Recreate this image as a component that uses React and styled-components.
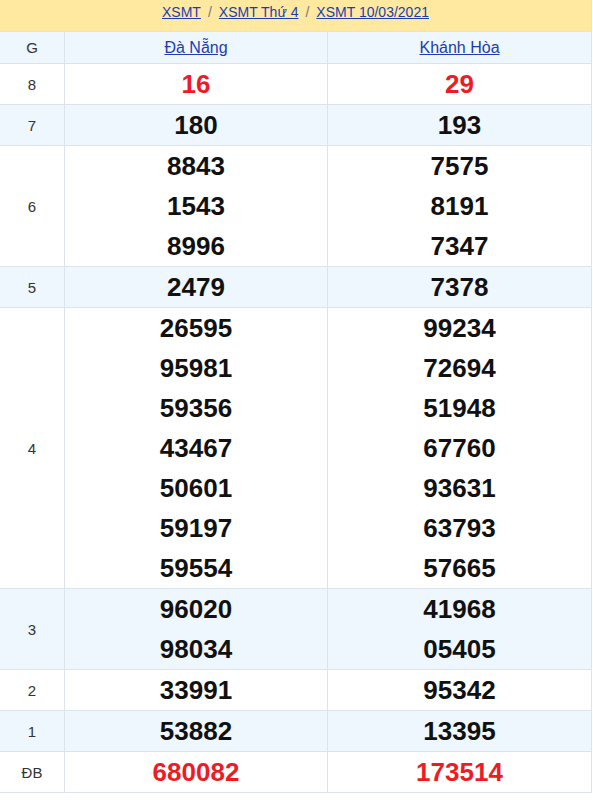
import React from 'react'
import styled, { createGlobalStyle } from 'styled-components'

const Global = createGlobalStyle`
  body {
    margin: 0;
    background: #fff;
    font-family: "Liberation Sans", Arial, sans-serif;
  }
`

const Board = styled.div`
  width: 592px;
  box-sizing: border-box;
  border-right: 1px solid #dde3ea;
`

const Crumbs = styled.div`
  height: 31px;
  line-height: 25px;
  background: #ffe8a0;
  border-bottom: 1px solid #dde3ea;
  text-align: center;
  font-size: 14px;
  color: #666;
`

const Crumb = styled.a`
  color: #1c3dae;
  text-decoration: underline;
`

const Sep = styled.span`
  color: #777;
  margin: 0 7px;
`

const Row = styled.div`
  display: grid;
  grid-template-columns: 65px 263px 263px;
  background: ${p => (p.$shade ? '#eef6fe' : '#fff')};
  border-bottom: 1px solid #dde3ea;
`

const Label = styled.div`
  display: flex;
  align-items: center;
  justify-content: center;
  border-right: 1px solid #dde3ea;
  font-size: 15px;
  color: #333;
`

const Cell = styled.div`
  display: flex;
  flex-direction: column;
  align-items: center;
  border-right: 1px solid #dde3ea;
  &:last-child {
    border-right: none;
  }
`

const Province = styled.a`
  line-height: 31px;
  font-size: 16px;
  color: #1c3dae;
  text-decoration: underline;
`

const Num = styled.div`
  height: 40px;
  line-height: 40px;
  font-size: 26px;
  font-weight: bold;
  color: ${p => (p.$red ? '#ed1c24' : '#111')};
`

const prizes = [
  { g: '8', red: true, a: ['16'], b: ['29'] },
  { g: '7', a: ['180'], b: ['193'] },
  { g: '6', a: ['8843', '1543', '8996'], b: ['7575', '8191', '7347'] },
  { g: '5', a: ['2479'], b: ['7378'] },
  {
    g: '4',
    a: ['26595', '95981', '59356', '43467', '50601', '59197', '59554'],
    b: ['99234', '72694', '51948', '67760', '93631', '63793', '57665']
  },
  { g: '3', a: ['96020', '98034'], b: ['41968', '05405'] },
  { g: '2', a: ['33991'], b: ['95342'] },
  { g: '1', a: ['53882'], b: ['13395'] },
  { g: 'ĐB', red: true, a: ['680082'], b: ['173514'] }
]

const App = () => (
  <Board>
    <Global />
    <Crumbs>
      <Crumb href='#'>XSMT</Crumb>
      <Sep>/</Sep>
      <Crumb href='#'>XSMT Thứ 4</Crumb>
      <Sep>/</Sep>
      <Crumb href='#'>XSMT 10/03/2021</Crumb>
    </Crumbs>
    <Row $shade>
      <Label>G</Label>
      <Cell><Province href='#'>Đà Nẵng</Province></Cell>
      <Cell><Province href='#'>Khánh Hòa</Province></Cell>
    </Row>
    {prizes.map((p, i) => (
      <Row key={p.g} $shade={i % 2 === 1}>
        <Label>{p.g}</Label>
        <Cell>
          {p.a.map(n => <Num key={n} $red={p.red}>{n}</Num>)}
        </Cell>
        <Cell>
          {p.b.map(n => <Num key={n} $red={p.red}>{n}</Num>)}
        </Cell>
      </Row>
    ))}
  </Board>
)

export default App
